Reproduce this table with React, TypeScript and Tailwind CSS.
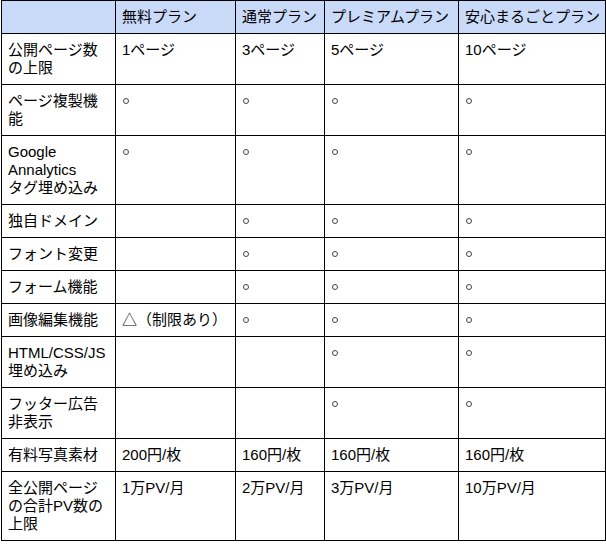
const plans = ['無料プラン', '通常プラン', 'プレミアムプラン', '安心まるごとプラン']

const rows: { label: string[]; values: string[] }[] = [
  { label: ['公開ページ数', 'の上限'], values: ['1ページ', '3ページ', '5ページ', '10ページ'] },
  { label: ['ページ複製機', '能'], values: ['○', '○', '○', '○'] },
  { label: ['Google', 'Annalytics', 'タグ埋め込み'], values: ['○', '○', '○', '○'] },
  { label: ['独自ドメイン'], values: ['', '○', '○', '○'] },
  { label: ['フォント変更'], values: ['', '○', '○', '○'] },
  { label: ['フォーム機能'], values: ['', '○', '○', '○'] },
  { label: ['画像編集機能'], values: ['△（制限あり）', '○', '○', '○'] },
  { label: ['HTML/CSS/JS', '埋め込み'], values: ['', '', '○', '○'] },
  { label: ['フッター広告', '非表示'], values: ['', '', '○', '○'] },
  { label: ['有料写真素材'], values: ['200円/枚', '160円/枚', '160円/枚', '160円/枚'] },
  { label: ['全公開ページ', 'の合計PV数の', '上限'], values: ['1万PV/月', '2万PV/月', '3万PV/月', '10万PV/月'] },
]

function Value({ text }: { text: string }) {
  if (text === '○') {
    return <span className="inline-block w-[6px] h-[6px] ml-[1px] mb-[2px] rounded-full border border-[#444] align-middle" />
  }
  return <>{text}</>
}

export default function App() {
  return (
    <div className="w-[606px] h-[544px] bg-white pl-px font-['Liberation_Sans','Noto_Sans_CJK_JP',sans-serif] text-[15px] leading-[18px] text-black">
      <table className="table-fixed w-[604px] border-collapse">
        <colgroup>
          <col className="w-[114px]" />
          <col className="w-[120px]" />
          <col className="w-[89px]" />
          <col className="w-[134px]" />
          <col className="w-[147px]" />
        </colgroup>
        <thead>
          <tr className="bg-[#c9daf8]">
            <th className="border border-black px-[6px] pt-[7px] pb-[7px] text-left font-normal align-top"></th>
            {plans.map((p) => (
              <th key={p} className="border border-black px-[6px] pt-[7px] pb-[7px] text-left font-normal align-top whitespace-nowrap">
                {p}
              </th>
            ))}
          </tr>
        </thead>
        <tbody>
          {rows.map((r, i) => (
            <tr key={i}>
              <td className="border border-black px-[6px] pt-[7px] pb-[7px] align-top">
                {r.label.map((l, j) => (
                  <div key={j}>{l}</div>
                ))}
              </td>
              {r.values.map((v, j) => (
                <td key={j} className="border border-black px-[6px] pt-[7px] pb-[7px] align-top whitespace-nowrap">
                  <Value text={v} />
                </td>
              ))}
            </tr>
          ))}
        </tbody>
      </table>
    </div>
  )
}
